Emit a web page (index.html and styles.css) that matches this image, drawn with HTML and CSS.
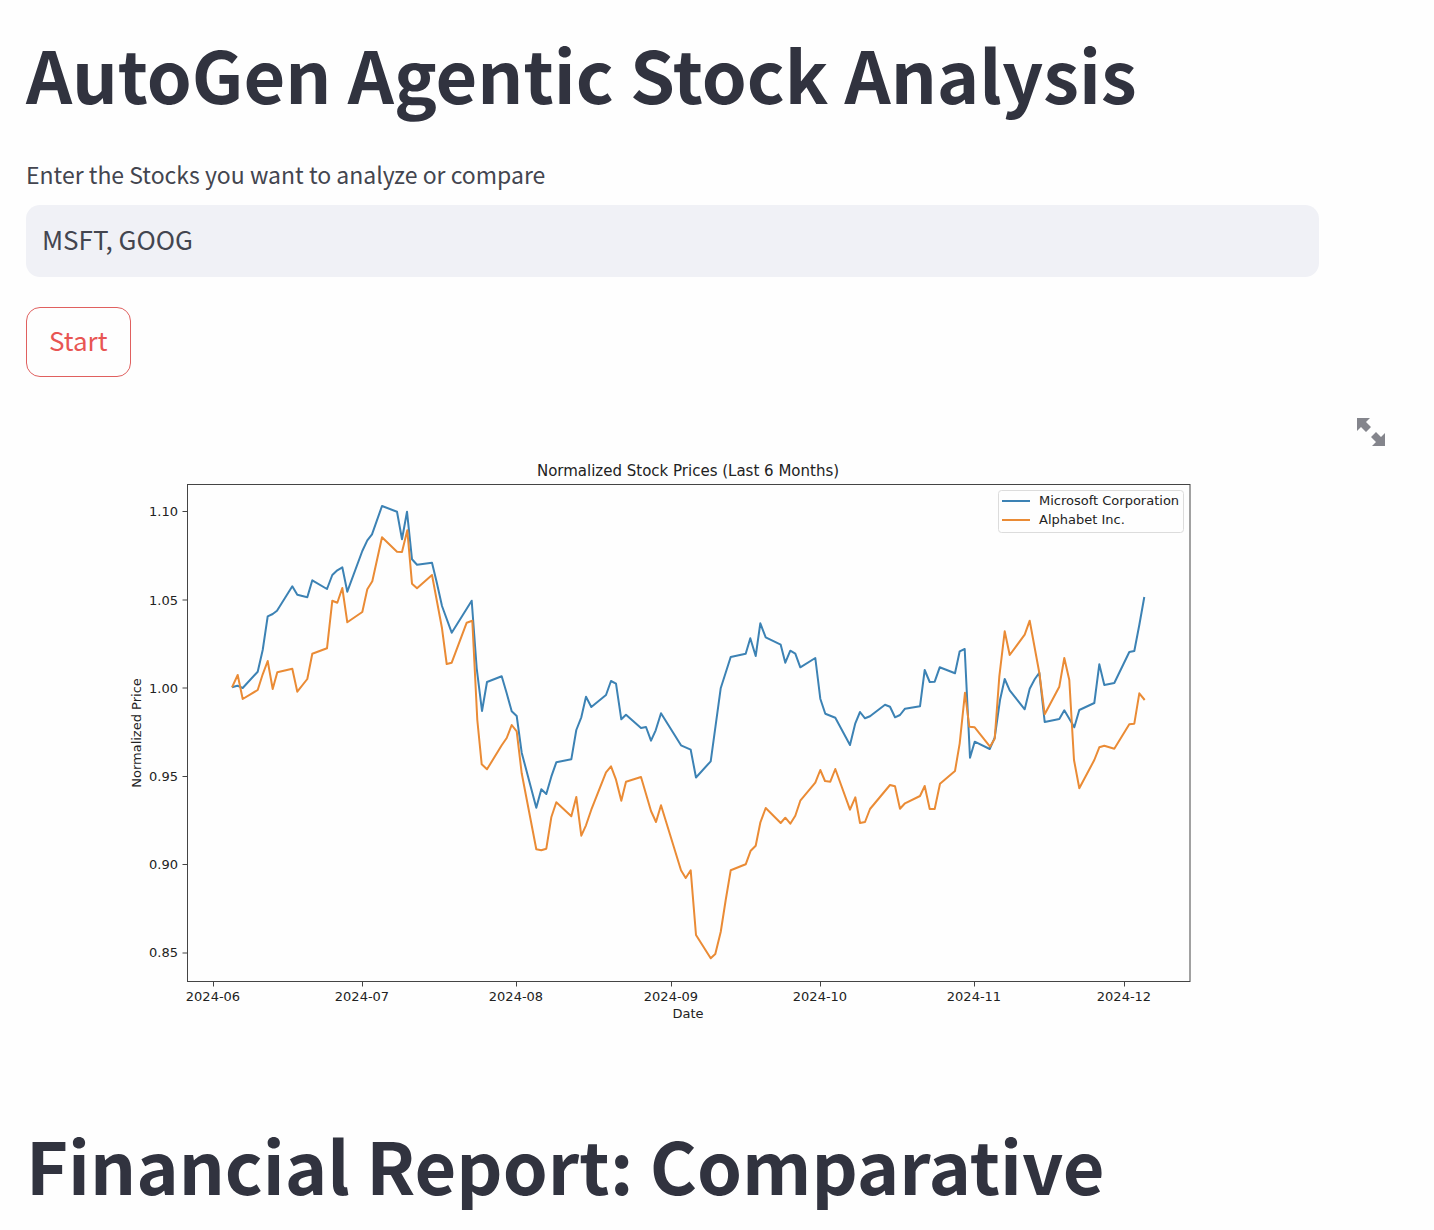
FILE: index.html
```html
<!DOCTYPE html>
<html lang="en">
<head>
<meta charset="utf-8">
<title>AutoGen Agentic Stock Analysis</title>
<link rel="stylesheet" href="styles.css">
</head>
<body>
<main class="page">
  <h1 class="heading">AutoGen Agentic Stock Analysis</h1>
  <form class="query">
    <label class="query-label" for="stocks">Enter the Stocks you want to analyze or compare</label>
    <input class="query-input" id="stocks" type="text" value="MSFT, GOOG">
    <button class="query-start" type="button">Start</button>
  </form>
  <figure class="figure">
    <div class="figure-tools">
      <button class="expand" type="button" aria-label="View fullscreen">
        <svg class="expand-icon" viewBox="0 0 28 28" aria-hidden="true">
          <path d="M0 0H13L9 4L14 9L9 14L4 9L0 13ZM28 28H15L19 24L14 19L19 14L24 19L28 15Z"/>
        </svg>
      </button>
    </div>
    <svg class="chart" viewBox="26 455 1293 600" role="img" aria-label="Normalized Stock Prices (Last 6 Months)">
      <text class="chart-title" x="688" y="476">Normalized Stock Prices (Last 6 Months)</text>
      <polyline class="line msft" points="232,687.3 237.3,685.7 242.7,688 257.7,671.7 262.7,650 267.7,616.3 272.7,614 277,610.7 292.3,586.3 297.3,594.7 307.3,597.3 312.3,580.3 327,589 332.3,575 337.3,570.3 342.3,567.3 347.3,591.7 362.3,551 367.3,540.3 372,534.3 382,506 397,511.7 402,539.3 407,511.7 412,559.3 417,564.7 432,562.7 436.7,582.3 442,606 451.7,632.7 471.7,600.7 476.7,668.3 482,711 487,682 501.7,676.3 506.7,693.3 511.7,711.3 516.7,716 521.7,752.7 536.3,807.7 541.3,789.3 546.3,794 551.3,776.7 556.3,762.3 571.3,759.3 576.3,730 581.3,717.3 586,696.7 591.3,707 606,695 611,681 616,683.7 621.3,719.3 626,714.7 641,728 646,727 651,740.7 655.7,730.3 661,713.3 681,745.3 690.7,749.7 696,777.5 710.7,761.3 720.7,688.3 730.7,657 745.7,653.7 750.3,638.3 755.7,656 760.3,623.3 765.7,637.3 780.7,644.7 785.3,662.7 790.3,650.7 795.3,653.7 800.3,667.3 815.3,658 820.3,698.7 825.3,713.7 835.3,717.7 850,745 855.3,723.3 860,712 865,718.3 870,716.3 885,704.7 890,706.7 895,717.3 900,715 905,708.7 920,706.3 924.7,670 929.7,682 934.7,681.7 939.7,667.3 955,673.3 959.7,651.3 964.7,649 970,757.7 974.7,741.7 989.7,749 994.7,737.7 1000,700 1004.7,679 1009.7,690.3 1024.7,709.3 1029.7,688.7 1034.7,679.3 1039.3,672.7 1044.7,722 1059.3,719 1064.3,710.3 1074.3,727.3 1079.3,710 1094.3,703 1099.3,664.3 1104.3,685 1114.3,683 1129.3,652 1134.3,651 1139.3,625 1144.3,597"/>
      <polyline class="line goog" points="232,687.3 237.7,675 242.7,699 257.7,690 262.7,674.3 267.7,661 272.7,689 277.3,672.3 292.3,668.7 297.3,691.7 307.3,679 312.3,653.7 327,648.3 332.3,600.7 337.3,602.7 342.3,588 347.3,622.3 362.3,612 367.3,589.3 372.3,581.3 382,537.3 397,551.7 402,552 407.3,530.3 412,583.7 417,588.3 432,575 442,628.3 446.7,664 451.7,662.7 466.7,622.7 472.3,620.7 477.3,720 481.7,764.3 487,769.3 501.7,745.3 506.7,738 511.7,725 516.7,731.3 521.7,773.3 536.3,849.3 541.3,850.3 546.3,848.7 551.3,817.3 556.3,802.3 571.3,816.3 576.3,797 581.3,835.7 586,825.3 591.3,809.7 606,772.3 611,766.3 616,779.7 621.3,800.7 626,781.7 641,777 651,811 656,822 661,805.3 681,870.3 685.7,878 690.7,870.3 696,935 710.7,958.3 715.3,954 720.7,932 725.7,900 730.7,870.3 745.7,864.3 750.7,850.7 755.7,845.7 760.3,822.7 765.7,808 780.7,823 785.3,817.7 790.3,823.7 795.3,815.7 800.3,800.7 815.3,782.7 820.3,770 825,781 830.3,781.7 835.3,769 850,809.7 855.3,797.3 860,823 865,822 870,809 890,785 895,786.3 900,808.7 905,803.3 920,796 924.7,786 929.7,809 934.7,809 940,783.7 955,771 959.7,743.3 965,692.7 969.3,726.7 974.7,727.3 990,746.7 994.7,738.7 999.3,676.7 1004.7,631.3 1009.7,655 1024.7,634.7 1029.7,620.7 1039.3,672.7 1044.7,714.3 1059.3,686.7 1064.3,658 1069.3,680 1074,760 1079.3,788.3 1094.3,760 1099.3,747.3 1104.3,745.7 1114.3,748.7 1129.3,724.3 1134.3,723.7 1139.3,693.3 1144.7,700"/>
      <rect class="frame" x="187.500" y="484.500" width="1002.500" height="497"/>
      <path class="ticks" d="M182.500 511.500H187.500M182.500 600H187.500M182.500 688H187.500M182.500 776.500H187.500M182.500 864.500H187.500M182.500 953H187.500M213.500 981.500V986.500M362.500 981.500V986.500M516.500 981.500V986.500M671.500 981.500V986.500M820.500 981.500V986.500M974.500 981.500V986.500M1124.500 981.500V986.500"/>
      <g class="label label-y">
        <text x="178" y="516">1.10</text>
        <text x="178" y="605">1.05</text>
        <text x="178" y="693">1.00</text>
        <text x="178" y="781">0.95</text>
        <text x="178" y="869">0.90</text>
        <text x="178" y="957">0.85</text>
      </g>
      <g class="label label-x">
        <text x="213" y="1001">2024-06</text>
        <text x="362" y="1001">2024-07</text>
        <text x="516" y="1001">2024-08</text>
        <text x="671" y="1001">2024-09</text>
        <text x="820" y="1001">2024-10</text>
        <text x="974" y="1001">2024-11</text>
        <text x="1124" y="1001">2024-12</text>
        <text x="688" y="1018">Date</text>
        <text transform="translate(141 733) rotate(-90)">Normalized Price</text>
      </g>
      <rect class="legend-box" x="998.500" y="490.500" width="185" height="42" rx="3"/>
      <path class="line msft" d="M1002 501H1030"/>
      <path class="line goog" d="M1002 520H1030"/>
      <g class="label">
        <text x="1039" y="505">Microsoft Corporation</text>
        <text x="1039" y="524">Alphabet Inc.</text>
      </g>
    </svg>
  </figure>
  <h1 class="heading report-heading">Financial Report: Comparative</h1>
</main>
</body>
</html>
```
FILE: styles.css
```css
* { box-sizing: border-box; }

body {
  margin: 0;
  background: #fefefe;
  color: #31333f;
  font-family: "Noto Sans CJK SC", "Source Sans Pro", sans-serif;
}

.page { padding: 30px 49px 24px 26px; }

.heading {
  margin: 0;
  font-size: 72px;
  font-weight: 700;
  line-height: 86px;
}

.query {
  display: flex;
  flex-direction: column;
  align-items: flex-start;
  margin-top: 40px;
  padding-right: 66px;
  color: #43454f;
}

.query-label {
  font-size: 23px;
  line-height: 36px;
}

.query-input {
  width: 100%;
  height: 72px;
  margin: 13px 0 30px;
  padding: 0 16px 6px;
  border: 0;
  border-radius: 14px;
  background: #f0f1f6;
  color: inherit;
  font: inherit;
  font-size: 26px;
}

.query-start {
  height: 70px;
  padding: 0 22px 6px;
  border: 1px solid #e0605f;
  border-radius: 14px;
  background: transparent;
  color: #e85553;
  font: inherit;
  font-size: 26px;
}

.figure { margin: 41px 0 0; }

.figure-tools {
  display: flex;
  justify-content: flex-end;
}

.expand {
  display: flex;
  padding: 0;
  border: 0;
  background: none;
}

.expand-icon {
  width: 28px;
  height: 28px;
  fill: #84858c;
}

.chart {
  display: block;
  width: calc(100% - 66px);
  margin-top: 9px;
  font-family: "DejaVu Sans", sans-serif;
  fill: #222;
}

.chart-title {
  font-size: 15px;
  text-anchor: middle;
}

.line {
  fill: none;
  stroke-width: 2;
  stroke-linejoin: round;
}

.msft { stroke: #3c82b4; }
.goog { stroke: #ea8b35; }

.frame {
  fill: none;
  stroke: #444;
}

.ticks { stroke: #444; }

.legend-box {
  fill: #fefefe;
  stroke: #dcdcdc;
}

.label { font-size: 13px; }
.label-y { text-anchor: end; }
.label-x { text-anchor: middle; }

.report-heading { margin-top: 66px; }
```
